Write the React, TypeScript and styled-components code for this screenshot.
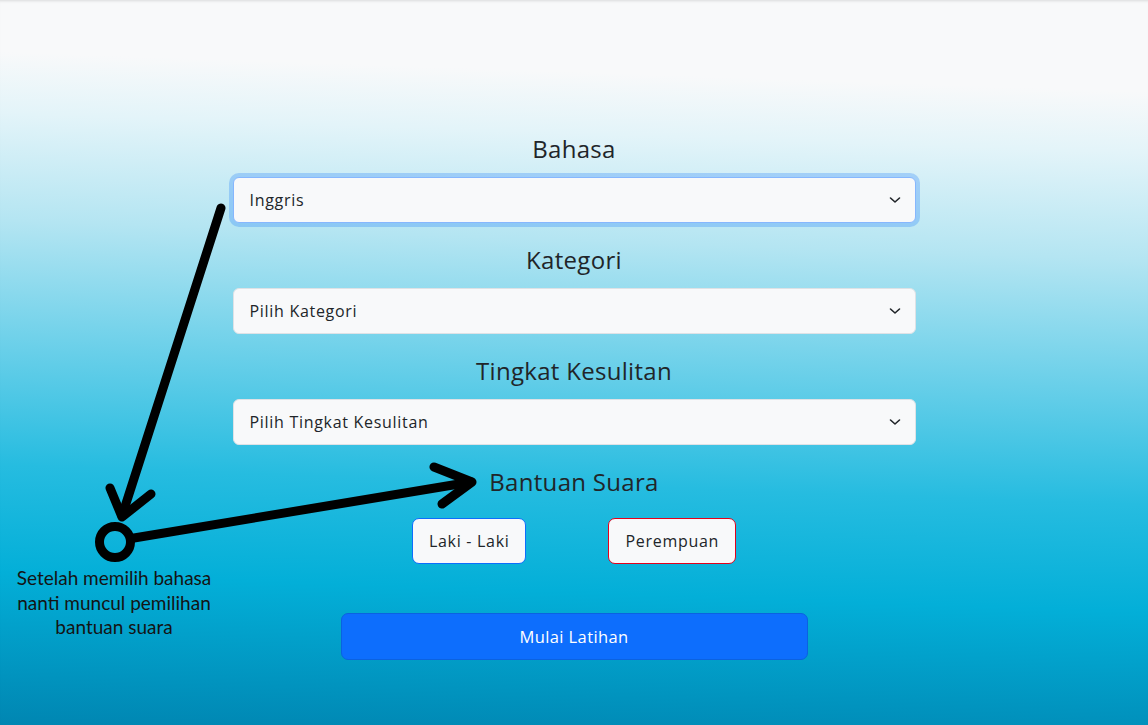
import React from "react";
import styled, { createGlobalStyle } from "styled-components";

const GlobalStyle = createGlobalStyle`
  html, body {
    margin: 0;
    padding: 0;
  }
  body {
    font-family: "Open Sans", "Lato", sans-serif;
    color: #212529;
  }
`;

const Page = styled.div`
  position: relative;
  min-height: 100vh;
  width: 100%;
  overflow: hidden;
  background: linear-gradient(
    182deg,
    #f8f9fa 0%,
    #f8f9fa 12%,
    #e3f4f9 20%,
    #b4e5f2 34%,
    #68cfe9 51%,
    #26bce0 66%,
    #03afd8 80%,
    #0086b2 100%
  );
  box-shadow: inset 0 3px 3px -2px rgba(0, 0, 0, 0.12);
`;

const Form = styled.div`
  width: 683px;
  margin: 0 auto;
  padding-top: 134px;
  display: flex;
  flex-direction: column;
  align-items: center;
`;

const Label = styled.h4`
  margin: 0 0 14px;
  font-size: 24px;
  line-height: 29px;
  font-weight: 400;
  letter-spacing: 0.3px;
  color: #212529;
  text-align: center;
`;

const SelectWrap = styled.div`
  position: relative;
  width: 100%;
  margin-bottom: 22px;
`;

const Select = styled.select<{ $focused?: boolean }>`
  appearance: none;
  width: 100%;
  height: 46px;
  padding: 0 40px 0 16px;
  font-family: inherit;
  font-size: 16px;
  letter-spacing: 0.7px;
  color: #212529;
  background: #f8f9fa;
  border: 1px solid ${(p) => (p.$focused ? "#86b7fe" : "#dee2e6")};
  border-radius: 6px;
  box-shadow: ${(p) =>
    p.$focused ? "0 0 0 4px rgba(13, 110, 253, 0.25)" : "none"};
  outline: none;
`;

const Chevron = styled.svg`
  position: absolute;
  right: 15px;
  top: 50%;
  transform: translateY(-50%);
  pointer-events: none;
`;

const VoiceRow = styled.div`
  display: flex;
  justify-content: center;
  gap: 82px;
  margin-top: 8px;
`;

const VoiceButton = styled.button<{ $tone: string }>`
  height: 46px;
  padding: 0 16px;
  font-family: inherit;
  font-size: 16px;
  letter-spacing: 0.7px;
  color: #212529;
  background: #f8f9fa;
  border: 1px solid ${(p) => p.$tone};
  border-radius: 7px;
  cursor: pointer;
`;

const StartButton = styled.button`
  width: 467px;
  height: 47px;
  margin-top: 49px;
  font-family: inherit;
  font-size: 16.5px;
  letter-spacing: 0.4px;
  color: #fff;
  background: #0d6efd;
  border: 1px solid #0b62e0;
  border-radius: 7px;
  cursor: pointer;
`;

const Overlay = styled.svg`
  position: absolute;
  top: 0;
  left: 0;
  pointer-events: none;
`;

const Note = styled.div`
  position: absolute;
  left: 4px;
  top: 566px;
  width: 220px;
  text-align: center;
  font-family: "Lato", "Liberation Sans", sans-serif;
  font-size: 19px;
  line-height: 24.5px;
  color: #141414;
`;

const ChevronIcon = () => (
  <Chevron width="12" height="7" viewBox="0 0 12 7">
    <path
      d="M1.5 1.5 L6 5.5 L10.5 1.5"
      fill="none"
      stroke="#212529"
      strokeWidth="1.6"
      strokeLinecap="round"
      strokeLinejoin="round"
    />
  </Chevron>
);

interface FieldProps {
  label: string;
  value: string;
  focused?: boolean;
}

const Field = ({ label, value, focused }: FieldProps): JSX.Element => (
  <>
    <Label>{label}</Label>
    <SelectWrap>
      <Select $focused={focused} defaultValue={value}>
        <option>{value}</option>
      </Select>
      <ChevronIcon />
    </SelectWrap>
  </>
);

const App = (): JSX.Element => (
  <Page>
    <GlobalStyle />
    <Form>
      <Field label="Bahasa" value="Inggris" focused />
      <Field label="Kategori" value="Pilih Kategori" />
      <Field label="Tingkat Kesulitan" value="Pilih Tingkat Kesulitan" />
      <Label>Bantuan Suara</Label>
      <VoiceRow>
        <VoiceButton $tone="#0d6efd">Laki - Laki</VoiceButton>
        <VoiceButton $tone="#e3001b">Perempuan</VoiceButton>
      </VoiceRow>
      <StartButton>Mulai Latihan</StartButton>
    </Form>

    {/* hand-drawn annotation on top of the form */}
    <Overlay width="1148" height="725" viewBox="0 0 1148 725">
      <g
        fill="none"
        stroke="#000"
        strokeWidth="9"
        strokeLinecap="round"
        strokeLinejoin="round"
      >
        <path d="M221 208 L122 516" />
        <path d="M110 488 L122 517 L151 494" />
        <circle cx="115" cy="542" r="15.5" />
        <path d="M134 538 L471 482" />
        <path d="M434 467 L472 482 L442 504" />
      </g>
    </Overlay>
    <Note>
      Setelah memilih bahasa
      <br />
      nanti muncul pemilihan
      <br />
      bantuan suara
    </Note>
  </Page>
);

export default App;
